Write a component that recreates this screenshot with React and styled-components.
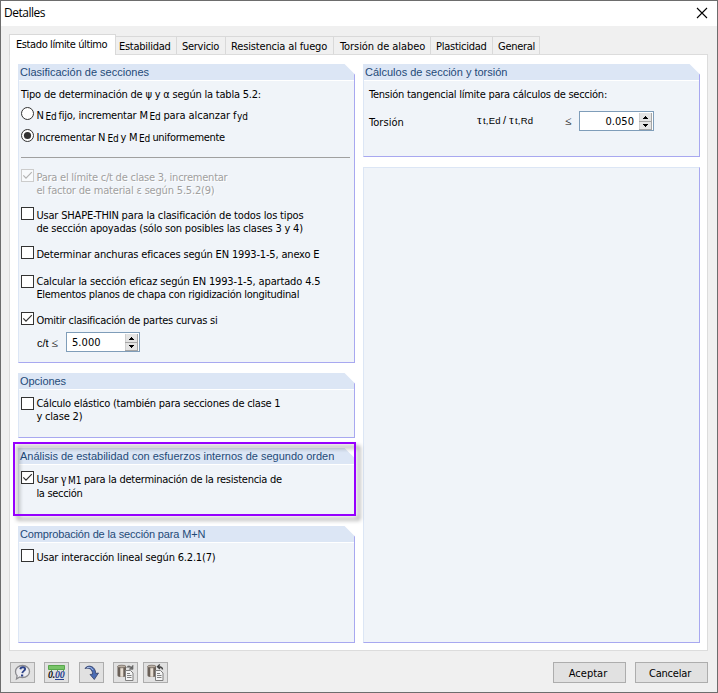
import React from 'react';
import styled, { createGlobalStyle } from 'styled-components';

const ui = '"DejaVu Sans Condensed", "DejaVu Sans", sans-serif';

const GlobalStyle = createGlobalStyle`
  * { box-sizing: border-box; }
  body { margin: 0; background: #f0f0f0; }
`;

const Dialog = styled.div`
  display: flex;
  flex-direction: column;
  width: 718px;
  height: 693px;
  border: 1px solid #6d6d6d;
  background: #f0f0f0;
  color: #000;
  font: 11px/13px ${ui};
  white-space: pre;
`;

const TitleBar = styled.header`
  display: flex;
  justify-content: space-between;
  height: 25px;
  padding: 4px 9px 0 3px;
  background: #fff;
  font: 12px/16px "Open Sans", sans-serif;
  letter-spacing: -0.5px;
`;

const CloseIcon = styled.svg`
  width: 12px;
  height: 12px;
  margin-top: 2px;
`;

const Tabs = styled.nav`
  display: flex;
  align-items: flex-end;
  height: 28px;
  padding-left: 8px;
`;

const Tab = styled.div`
  width: ${(p) => p.$w}px;
  height: 18px;
  padding: 3px 0 0 ${(p) => p.$pl ?? 5}px;
  border: 1px solid #d9d9d9;
  border-width: 1px 1px 0 0;
  letter-spacing: ${(p) => p.$ls}px;
`;

const ActiveTab = styled(Tab)`
  z-index: 1;
  height: 21px;
  margin-bottom: -1px;
  padding: 3px 0 0 6px;
  border-left-width: 1px;
  background: #fff;
`;

const Panel = styled.main`
  display: flex;
  gap: 8px;
  width: 699px;
  height: 597px;
  margin-left: 8px;
  padding: 9px 0 0 8px;
  border: 1px solid #dcdcdc;
  background: #fff;
`;

const Column = styled.div`
  display: flex;
  flex-direction: column;
  gap: 10px;
  width: 337px;
  height: 579px;
`;

const Box = styled.section`
  height: ${(p) => p.$h}px;
  border: 1px solid #a8a8f0;
  border-left-color: #dce6f5;
  border-top-color: #dce6f5;
  background: #f0f4f9;
`;

const EmptyBox = styled(Box)`
  flex: 1;
`;

const GroupBox = styled(Box)`
  border-top: 0;
  clip-path: polygon(0 0, calc(100% - 10.5px) 0, 100% 10.5px, 100% 100%, 0 100%);
`;

const GroupTitle = styled.h2`
  height: 17px;
  margin: 0;
  padding: 2px 0 0 1px;
  border-bottom: 1px solid #fff;
  background: #dce6f5;
  color: #1f4a78;
  font: 11px/13px "Liberation Sans", sans-serif;
  letter-spacing: ${(p) => p.$ls || 0}px;
`;

const GroupBody = styled.div`
  display: flex;
  flex-direction: column;
  padding: ${(p) => p.$top}px 4px 0 ${(p) => p.$left || 2}px;
`;

const Row = styled.div`
  display: flex;
  align-items: flex-start;
  margin-top: ${(p) => p.$gap || 0}px;
`;

const Phrase = styled.span`
  flex: none;
  width: ${(p) => (p.$w ? `${p.$w}px` : 'auto')};
  letter-spacing: ${(p) => p.$ls || 0}px;
`;

const Sub = styled(Phrase)`
  height: 13px;
  padding-top: 1px;
  font-size: 10px;
`;

const Greek = styled(Phrase)`
  font-family: "Liberation Serif", serif;
  font-size: 12px;
`;

const Lines = styled.div`
  display: flex;
  flex-direction: column;
  gap: ${(p) => p.$gap || 0}px;
  padding-top: ${(p) => p.$drop}px;
  color: ${(p) => (p.$disabled ? '#a0a0a0' : 'inherit')};
  text-shadow: ${(p) => (p.$disabled ? '1px 1px 0 #fff' : 'none')};
`;

const Mark = styled.svg`
  flex: none;
  width: 13px;
  height: 13px;
  margin-right: 2.4px;
`;

const Divider = styled.hr`
  width: 329px;
  height: 1px;
  margin: 13px 0 11px;
  border: 0;
  background: #a0a0a0;
`;

const Spinner = styled.div`
  display: flex;
  justify-content: space-between;
  width: ${(p) => p.$w}px;
  height: 20px;
  padding: 0 1px 0 5px;
  border: 1px solid #7f9db9;
  background: #fff;
  line-height: 20px;
  letter-spacing: 0.05px;
`;

const SpinnerValue = styled.span`
  flex: 1;
  height: 18px;
  padding-right: 5px;
  text-align: ${(p) => p.$align || 'left'};
`;

const SpinnerButtons = styled.svg`
  width: 13px;
  height: 17px;
  margin-top: 1px;
`;

const Highlighted = styled.div`
  position: relative;
`;

const HighlightFrame = styled.div`
  position: absolute;
  z-index: 2;
  top: -6px;
  left: -5px;
  width: 343px;
  height: 74px;
  border: 2px solid #9600ff;
  filter: drop-shadow(4px 4px 2px rgba(0, 0, 0, 0.45));
`;

const Footer = styled.footer`
  display: flex;
  justify-content: space-between;
  padding: 11px 9px 0;
`;

const ButtonGroup = styled.div`
  display: flex;
  gap: 9px;
`;

const Button = styled.button`
  display: flex;
  justify-content: center;
  align-items: center;
  width: ${(p) => p.$w || 25}px;
  height: 21px;
  margin-right: ${(p) => p.$mr || 0}px;
  padding: 0;
  border: 1px solid #adadad;
  background: #e1e1e1;
  color: #000;
  font: 11px/13px ${ui};
  letter-spacing: ${(p) => p.$ls || 0}px;
`;

const TextButton = styled(Button)`
  padding: 1px 3px 0 0;
`;

const Glyph = styled.svg`
  width: 19px;
  height: 17px;
`;

function Check({ checked, disabled, drop = 2, gap, lineGap, children }) {
  return (
    <Row $gap={gap}>
      <Mark viewBox="0 0 13 13">
        <rect x=".5" y=".5" width="12" height="12" fill={disabled ? '#f8fafc' : '#fff'} stroke={disabled ? '#ccc' : '#333'} />
        {checked && <path d="M2.3 6.3 5 9.2 10.8 3.2" fill="none" stroke={disabled ? '#b4b4b4' : '#333'} strokeWidth="1.2" />}
      </Mark>
      <Lines $drop={drop} $gap={lineGap} $disabled={disabled}>{children}</Lines>
    </Row>
  );
}

function Radio({ checked }) {
  return (
    <Mark viewBox="0 0 13 13">
      <circle cx="6.5" cy="6.5" r="6" fill="#fff" stroke="#333" />
      {checked && <circle cx="6.5" cy="6.5" r="3.6" fill="#333" />}
    </Mark>
  );
}

function NumberField({ width, align, children }) {
  return (
    <Spinner $w={width}>
      <SpinnerValue $align={align}>{children}</SpinnerValue>
      <SpinnerButtons viewBox="0 0 13 17">
        <rect width="13" height="17" fill="#e4e4e4" />
        <path d="M0 8h13v1H0zM12 0h1v17h-1zM0 16h13v1H0z" fill="#a6a6a6" />
        <path d="M0 0h1v8H0zM0 9h1v7H0z" fill="#cfcfcf" />
        <path d="M6 3h1v1h1v1h1v1H4V5h1V4h1zM4 11h5v1H8v1H7v1H6v-1H5v-1H4z" fill="#000" />
      </SpinnerButtons>
    </Spinner>
  );
}

function Group({ title, ls, height, top, left, children }) {
  return (
    <GroupBox $h={height}>
      <GroupTitle $ls={ls}>{title}</GroupTitle>
      <GroupBody $top={top} $left={left}>{children}</GroupBody>
    </GroupBox>
  );
}

function HelpGlyph() {
  return (
    <Glyph viewBox="0 0 19 17">
      <path d="M9.5 1.5c4 0 7 2.500 7 6s-3 6-7 6c-1 0-2-.2-2.800-.5L3.500 15l.6-3.200C3 10.800 2.500 9.300 2.500 7.500c0-3.500 3-6 7-6z" fill="#ececf0" stroke="#8a8a8e" strokeWidth="1.300" />
      <path d="M7.300 5.300c.3-1.500 1.300-2 2.600-2 1.500 0 2.300.7 2.200 1.800-.2 1.700-2.500 1.900-2.800 4" fill="none" stroke="#2c4288" strokeWidth="1.900" />
      <path d="M8 10.500h2.200v2H8z" fill="#2c4288" />
    </Glyph>
  );
}

const Digits = styled.text`
  font: italic bold 10px "Liberation Serif", serif;
  letter-spacing: -0.3px;
`;

function UnitsGlyph() {
  return (
    <Glyph viewBox="0 0 19 17">
      <path d="M1.500 1.500h16v4h-16z" fill="#78c468" stroke="#58a64c" />
      <path d="M4 5h1v2H4zM7 5h1v1H7zM10 5h1v2h-1zM13 5h1v1h-1zM16 5h1v2h-1z" fill="#58a64c" />
      <Digits x="1" y="14" fill="#111">0.</Digits>
      <Digits x="8" y="14" fill="#27408f">00</Digits>
      <path d="M8 15h9v1H8z" fill="#27408f" />
    </Glyph>
  );
}

function ArrowGlyph() {
  return (
    <Glyph viewBox="0 0 19 17">
      <path d="M3 4.500C6 0 13.500 2 13.800 9.500l2.700-.5-4.200 6.500L8 10.500l2.600-.4C10.500 5.500 7.500 3.300 3 4.500z" fill="#4a6cb4" stroke="#333f66" strokeWidth=".8" />
      <path d="M5 3.700c3-1 5 .3 6 2.300" fill="none" stroke="#aac0e8" />
    </Glyph>
  );
}

function DatabaseGlyph({ incoming }) {
  return (
    <Glyph viewBox="0 0 19 17">
      <path d="M1.500 2.500v9c0 2 8.500 2 8.500 0v-9z" fill="#6a6058" />
      <path d="M4.300 3.500h3v9.300h-3z" fill="#e6ddd2" />
      <ellipse cx="5.750" cy="2.500" rx="4.200" ry="1.300" fill="#b9afa4" stroke="#6a6058" strokeWidth=".7" />
      <path d="M9.500 6.500h5l2.500 2.500v7.500H9.500z" fill="#f4f4f4" stroke="#808080" />
      <path d="M11 9.500h3M11 11.500h4.500M11 13.500h4.500" stroke="#808080" />
      {incoming ? (
        <path d="M16.500 5.500c0-2-1.500-2.800-4-2.800M13.800.5 11.500 2.700l2.500 2.200" fill="none" stroke="#444" strokeWidth="1.400" />
      ) : (
        <path d="M10.500 3.500c1-2 3.500-2.200 5.300.3M17 1.300v4h-3.700z" fill="#555" fillOpacity=".8" stroke="#555" strokeWidth=".6" />
      )}
    </Glyph>
  );
}

const FieldLabel = styled.div`
  display: flex;
  align-items: baseline;
  width: ${(p) => p.$w}px;
  padding: ${(p) => p.$top}px 0 0 ${(p) => p.$left || 0}px;
`;

const ArialPhrase = styled(Phrase)`
  font-family: "Liberation Sans", sans-serif;
  font-size: ${(p) => p.$size || 11}px;
`;

function CtRow() {
  return (
    <Row $gap={5}>
      <FieldLabel $w={45} $top={5} $left={16}>
        <ArialPhrase $w={14.5}>c/t</ArialPhrase>
        <Greek>≤</Greek>
      </FieldLabel>
      <NumberField width={74}>5.000</NumberField>
    </Row>
  );
}

function TorsionRow() {
  return (
    <Row $gap={10}>
      <FieldLabel $w={108} $top={5}>
        <Phrase $ls={0.05}>Torsión</Phrase>
      </FieldLabel>
      <FieldLabel $w={88} $top={3}>
        <Greek $w={6}>τ</Greek>
        <ArialPhrase $w={20} $size={9.5} $ls={0.2}>t,Ed</ArialPhrase>
        <ArialPhrase $w={6}>/</ArialPhrase>
        <Greek $w={6}>τ</Greek>
        <ArialPhrase $size={9.5} $ls={0.2}>t,Rd</ArialPhrase>
      </FieldLabel>
      <FieldLabel $w={14} $top={4}>
        <Greek>≤</Greek>
      </FieldLabel>
      <NumberField width={75} align="right">0.050</NumberField>
    </Row>
  );
}

export default function App() {
  return (
    <Dialog>
      <GlobalStyle />
      <TitleBar>
        <span>Detalles</span>
        <CloseIcon viewBox="0 0 12 12">
          <path d="M1 1 11 11M11 1 1 11" stroke="#000" strokeWidth="1.100" />
        </CloseIcon>
      </TitleBar>
      <Tabs>
        <ActiveTab $w={107} $ls={-0.4}>Estado límite último</ActiveTab>
        <Tab $w={61} $ls={-0.27} $pl={3}>Estabilidad</Tab>
        <Tab $w={49} $ls={-0.28}>Servicio</Tab>
        <Tab $w={108} $ls={-0.16}>Resistencia al fuego</Tab>
        <Tab $w={97} $ls={-0.08} $pl={6}>Torsión de alabeo</Tab>
        <Tab $w={62} $ls={-0.26}>Plasticidad</Tab>
        <Tab $w={47} $ls={-0.28}>General</Tab>
      </Tabs>
      <Panel>
        <Column>
          <Group title="Clasificación de secciones" height={299} top={7}>
            <Phrase $ls={-0.207}>Tipo de determinación de ψ y α según la tabla 5.2:</Phrase>
            <Row $gap={6}>
              <Radio />
              <Lines $drop={2}>
                <Row>
                  <Phrase $w={9}>N</Phrase>
                  <Sub $w={13}>Ed</Sub>
                  <Phrase $w={81} $ls={-0.22}>fijo, incrementar</Phrase>
                  <Phrase $w={10}>M</Phrase>
                  <Sub $w={14}>Ed</Sub>
                  <Phrase $w={73.5} $ls={-0.08}>para alcanzar f</Phrase>
                  <Sub>yd</Sub>
                </Row>
              </Lines>
            </Row>
            <Row $gap={7}>
              <Radio checked />
              <Lines $drop={2}>
                <Row>
                  <Phrase $w={61.5} $ls={-0.14}>Incrementar</Phrase>
                  <Phrase $w={9.5}>N</Phrase>
                  <Sub $w={13}>Ed</Sub>
                  <Phrase $w={8.5}>y</Phrase>
                  <Phrase $w={10}>M</Phrase>
                  <Sub $w={13.5}>Ed</Sub>
                  <Phrase $ls={-0.3}>uniformemente</Phrase>
                </Row>
              </Lines>
            </Row>
            <Divider />
            <Check checked disabled>
              <Phrase $ls={-0.23}>Para el límite c/t de clase 3, incrementar</Phrase>
              <Phrase $ls={-0.18}>el factor de material ε según 5.5.2(9)</Phrase>
            </Check>
            <Check gap={10}>
              <Phrase $ls={-0.167}>Usar SHAPE-THIN para la clasificación de todos los tipos</Phrase>
              <Phrase $ls={-0.2}>de sección apoyadas (sólo son posibles las clases 3 y 4)</Phrase>
            </Check>
            <Check gap={11}>
              <Phrase $ls={-0.169}>Determinar anchuras eficaces según EN 1993-1-5, anexo E</Phrase>
            </Check>
            <Check gap={14} drop={0}>
              <Phrase $ls={-0.151}>Calcular la sección eficaz según EN 1993-1-5, apartado 4.5</Phrase>
              <Phrase $ls={-0.295}>Elementos planos de chapa con rigidización longitudinal</Phrase>
            </Check>
            <Check checked gap={11}>
              <Phrase $ls={-0.267}>Omitir clasificación de partes curvas si</Phrase>
            </Check>
            <CtRow />
          </Group>
          <Group title="Opciones" ls={-0.06} height={65} top={7}>
            <Check drop={0}>
              <Phrase $ls={-0.243}>Cálculo elástico (también para secciones de clase 1</Phrase>
              <Phrase $ls={-0.18}>y clase 2)</Phrase>
            </Check>
          </Group>
          <Highlighted>
            <Group title="Análisis de estabilidad con esfuerzos internos de segundo orden" height={68} top={6}>
              <Check checked lineGap={1}>
                <Row>
                  <Phrase $w={24.5} $ls={-0.2}>Usar</Phrase>
                  <Greek $w={7}>γ</Greek>
                  <Sub $w={16}>M1</Sub>
                  <Phrase $ls={-0.253}>para la determinación de la resistencia de</Phrase>
                </Row>
                <Phrase $ls={-0.316}>la sección</Phrase>
              </Check>
            </Group>
            <HighlightFrame />
          </Highlighted>
          <Group title="Comprobación de la sección para M+N" ls={-0.15} height={117} top={6}>
            <Check>
              <Phrase $ls={-0.187}>Usar interacción lineal según 6.2.1(7)</Phrase>
            </Check>
          </Group>
        </Column>
        <Column>
          <Group title="Cálculos de sección y torsión" height={93} top={7} left={5}>
            <Phrase $ls={-0.249}>Tensión tangencial límite para cálculos de sección:</Phrase>
            <TorsionRow />
          </Group>
          <EmptyBox />
        </Column>
      </Panel>
      <Footer>
        <ButtonGroup>
          <Button><HelpGlyph /></Button>
          <Button $mr={1}><UnitsGlyph /></Button>
          <Button><ArrowGlyph /></Button>
          <Button $mr={-4}><DatabaseGlyph /></Button>
          <Button><DatabaseGlyph incoming /></Button>
        </ButtonGroup>
        <ButtonGroup>
          <TextButton $w={73}>Aceptar</TextButton>
          <TextButton $w={73} $ls={-0.2}>Cancelar</TextButton>
        </ButtonGroup>
      </Footer>
    </Dialog>
  );
}
